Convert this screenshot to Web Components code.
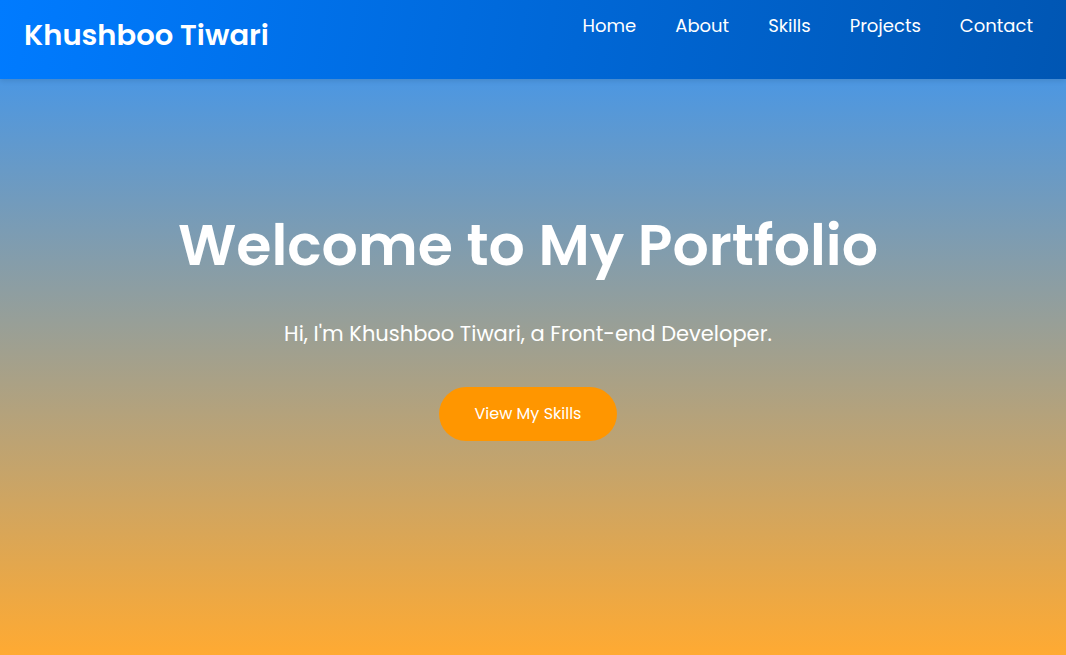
<!DOCTYPE html>
<html lang="en">
<head>
<meta charset="utf-8">
<meta name="viewport" content="width=device-width, initial-scale=1">
<title>Khushboo Tiwari | Portfolio</title>
<style>
html { height: 100%; }
body { margin: 0; min-height: 100%; display: flex; flex-direction: column; background: #ffaa32; color: #fff; font-family: Poppins, Inter, sans-serif; }
portfolio-hero { flex: 1; }
</style>
</head>
<body>
<portfolio-header>
  <span slot="brand">Khushboo Tiwari</span>
  <nav-link href="#home">Home</nav-link>
  <nav-link href="#about">About</nav-link>
  <nav-link href="#skills">Skills</nav-link>
  <nav-link href="#projects">Projects</nav-link>
  <nav-link href="#contact">Contact</nav-link>
</portfolio-header>
<portfolio-hero>
  <span slot="title">Welcome to My Portfolio</span>
  <span slot="intro">Hi, I'm Khushboo Tiwari, a Front-end Developer.</span>
  <pill-link href="#skills">View My Skills</pill-link>
</portfolio-hero>
<script>
const define = (name, html, setup) => customElements.define(name, class extends HTMLElement {
  constructor() {
    super();
    this.attachShadow({ mode: 'open' }).innerHTML = html;
  }
  connectedCallback() { if (setup) setup(this); }
});
const passHref = el => { el.shadowRoot.querySelector('a').href = el.getAttribute('href'); };

define('portfolio-header', `<style>
  :host { display: block; position: relative; z-index: 1; background: linear-gradient(100deg, #007bff, #0056b3); box-shadow: 0 2px 5px rgba(0, 0, 0, .1); }
  header { display: flex; flex-wrap: wrap; justify-content: space-between; align-items: flex-start; gap: 0 24px; padding: 12px 33px 21px 24px; }
  h1 { margin: 0; font-size: 29px; line-height: 46px; font-weight: 600; }
  nav { display: flex; flex-wrap: wrap; gap: 0 39px; }
</style><header><h1><slot name="brand"></slot></h1><nav aria-label="Main"><slot></slot></nav></header>`);

define('nav-link', `<style>
  :host { display: block; }
  a { display: block; color: #fff; text-decoration: none; font-size: 18px; line-height: 28px; }
  a:hover { color: #ff9800; }
</style><a><slot></slot></a>`, passHref);

define('portfolio-hero', `<style>
  :host { display: block; background: linear-gradient(#4c97e2, #ffaa32); }
  section { display: flex; flex-direction: column; align-items: center; text-align: center; padding: 122px 20px 80px 10px; }
  h2 { margin: 0; font-size: 57px; line-height: 88px; font-weight: 600; }
  p { margin: 28px 0 36px; font-size: 21px; line-height: 34px; }
</style><section><h2><slot name="title"></slot></h2><p><slot name="intro"></slot></p><slot></slot></section>`);

define('pill-link', `<style>
  :host { display: block; }
  a { display: block; padding: 15px 36px; border-radius: 30px; background: #ff9600; color: #fff; text-decoration: none; font-size: 16px; line-height: 24px; }
  a:hover { background: #e68900; }
</style><a><slot></slot></a>`, passHref);
</script>
</body>
</html>
